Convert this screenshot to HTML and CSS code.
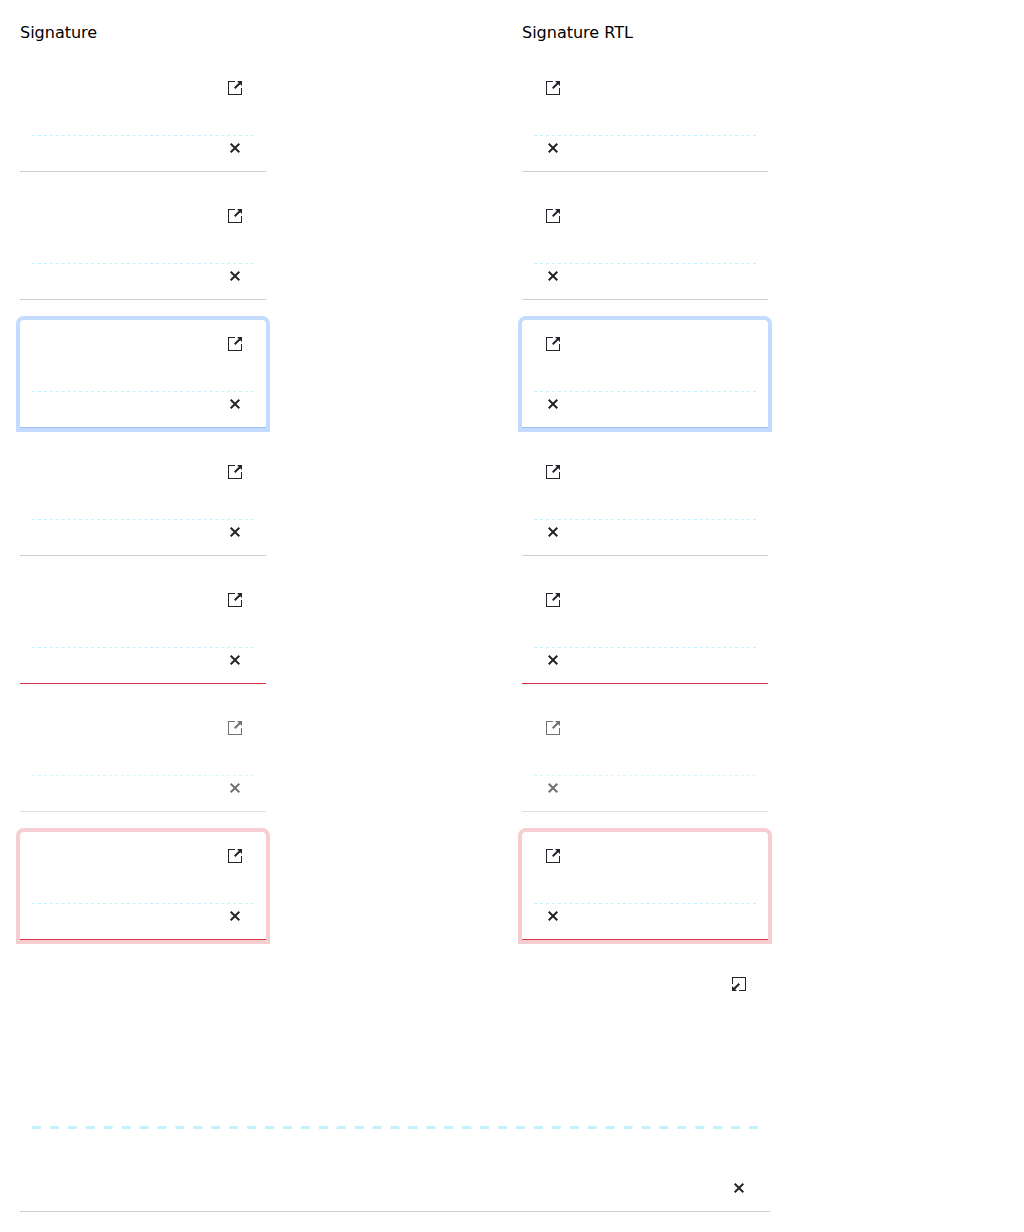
FILE: index.html
```
<!DOCTYPE html>
<html lang="en">
<head>
<meta charset="utf-8">
<title>Signature</title>
<link rel="stylesheet" href="styles.css">
</head>
<body>
<svg class="defs" aria-hidden="true">
  <symbol id="maximize" viewBox="0 0 16 16">
    <path d="M8 1H1v14h14V8h-1v6H2V2h6z"/>
    <path d="M10 1h5v5l-1.800-1.800L8.400 9 7 7.600l4.800-4.800z"/>
  </symbol>
  <symbol id="minimize" viewBox="0 0 16 16">
    <path d="M1 8V1h14v14H8v-1h6V2H2v6z"/>
    <path d="M6 15H1v-5l1.800 1.800L7.600 7 9 8.400l-4.800 4.800z"/>
  </symbol>
  <symbol id="clear" viewBox="0 0 16 16">
    <path d="M13 4.400 11.600 3 8 6.600 4.400 3 3 4.400 6.600 8 3 11.600 4.400 13 8 9.400l3.600 3.600 1.400-1.400L9.400 8z"/>
  </symbol>
  <symbol id="dashes">
    <line class="dash" x1="0" y1="0.5" x2="222" y2="0.5"/>
  </symbol>
</svg>
<main class="page">
  <section class="column">
    <h1>Signature</h1>
    <div class="signature"><svg class="icon"><use href="#maximize"/></svg><svg class="line"><use href="#dashes"/></svg><svg class="icon"><use href="#clear"/></svg></div>
    <div class="signature"><svg class="icon"><use href="#maximize"/></svg><svg class="line"><use href="#dashes"/></svg><svg class="icon"><use href="#clear"/></svg></div>
    <div class="signature focus"><svg class="icon"><use href="#maximize"/></svg><svg class="line"><use href="#dashes"/></svg><svg class="icon"><use href="#clear"/></svg></div>
    <div class="signature"><svg class="icon"><use href="#maximize"/></svg><svg class="line"><use href="#dashes"/></svg><svg class="icon"><use href="#clear"/></svg></div>
    <div class="signature invalid"><svg class="icon"><use href="#maximize"/></svg><svg class="line"><use href="#dashes"/></svg><svg class="icon"><use href="#clear"/></svg></div>
    <div class="signature disabled"><svg class="icon"><use href="#maximize"/></svg><svg class="line"><use href="#dashes"/></svg><svg class="icon"><use href="#clear"/></svg></div>
    <div class="signature invalid invalid-focus"><svg class="icon"><use href="#maximize"/></svg><svg class="line"><use href="#dashes"/></svg><svg class="icon"><use href="#clear"/></svg></div>
  </section>
  <section class="column">
    <h1>Signature RTL</h1>
    <div class="signature" dir="rtl"><svg class="icon"><use href="#maximize"/></svg><svg class="line"><use href="#dashes"/></svg><svg class="icon"><use href="#clear"/></svg></div>
    <div class="signature" dir="rtl"><svg class="icon"><use href="#maximize"/></svg><svg class="line"><use href="#dashes"/></svg><svg class="icon"><use href="#clear"/></svg></div>
    <div class="signature focus" dir="rtl"><svg class="icon"><use href="#maximize"/></svg><svg class="line"><use href="#dashes"/></svg><svg class="icon"><use href="#clear"/></svg></div>
    <div class="signature" dir="rtl"><svg class="icon"><use href="#maximize"/></svg><svg class="line"><use href="#dashes"/></svg><svg class="icon"><use href="#clear"/></svg></div>
    <div class="signature invalid" dir="rtl"><svg class="icon"><use href="#maximize"/></svg><svg class="line"><use href="#dashes"/></svg><svg class="icon"><use href="#clear"/></svg></div>
    <div class="signature disabled" dir="rtl"><svg class="icon"><use href="#maximize"/></svg><svg class="line"><use href="#dashes"/></svg><svg class="icon"><use href="#clear"/></svg></div>
    <div class="signature invalid invalid-focus" dir="rtl"><svg class="icon"><use href="#maximize"/></svg><svg class="line"><use href="#dashes"/></svg><svg class="icon"><use href="#clear"/></svg></div>
  </section>
  <div class="signature maximized">
    <svg class="icon"><use href="#minimize"/></svg>
    <svg class="large-line"><line x1="0" y1="1.5" x2="726" y2="1.5"/></svg>
    <svg class="icon"><use href="#clear"/></svg>
  </div>
</main>
</body>
</html>
```
FILE: styles.css
```
* { box-sizing: border-box; }

body {
  margin: 0;
  background: #fff;
  color: #000;
  font: 16px/24px "DejaVu Sans", sans-serif;
}

.defs { display: none; }

.page {
  display: grid;
  grid-template-columns: 482px 482px;
  gap: 20px;
  padding: 20px;
}

.column {
  display: flex;
  flex-direction: column;
  gap: 20px;
}

h1 {
  height: 24px;
  margin: 0;
  padding-top: 1px;
  font: inherit;
}

.signature {
  display: flex;
  flex-direction: column;
  width: 246px;
  height: 108px;
  padding: 16px 12px;
  border-bottom: 1px solid #cfcfd1;
  border-radius: 4px 4px 0 0;
  color: #212529;
}

.icon {
  width: 16px;
  height: 16px;
  margin-inline-end: 11px;
  align-self: flex-end;
  flex: none;
  fill: currentColor;
}

.line {
  width: 222px;
  height: 1px;
  margin: 39px 0 4px;
  flex: none;
}

.dash {
  stroke: #c2f2fb;
  stroke-width: 1;
  stroke-dasharray: 3 2.919;
}

.focus {
  border-bottom-color: #9ebff4;
  box-shadow: 0 0 0 4px #c2dbff;
}

.invalid { border-bottom-color: #dc3545; }

.invalid-focus { box-shadow: 0 0 0 4px #f6cdd1; }

.disabled { opacity: 0.65; }

.maximized {
  grid-column: 1 / -1;
  width: 750px;
  height: 252px;
}

.large-line {
  width: 726px;
  height: 3px;
  margin: 134px 0 51px;
  flex: none;
  stroke: #c2f2fb;
  stroke-width: 3;
  stroke-dasharray: 9 8.925;
}
```
